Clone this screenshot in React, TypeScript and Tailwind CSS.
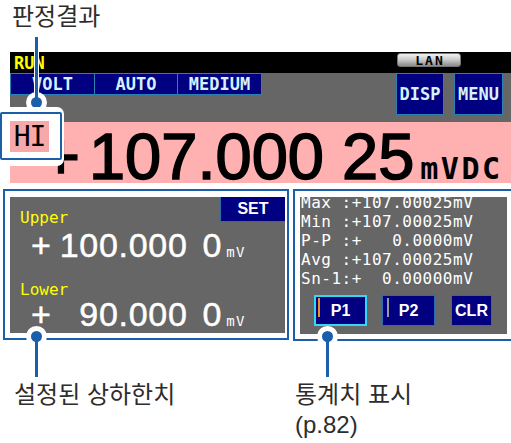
export default function App() {
  const statLines = [
    "Max :+107.00025mV",
    "Min :+107.00025mV",
    "P-P :+   0.0000mV",
    "Avg :+107.00025mV",
    "Sn-1:+  0.00000mV",
  ];
  return (
    <div className="relative h-[443px] w-[511px] overflow-hidden bg-white text-[#2d2d2d] [font-family:'Liberation_Sans','Noto_Sans_CJK_KR',sans-serif]">
      {/* title */}
      <div className="h-[52px] pl-[12px] pt-[2px] text-[24px] leading-[29px]">판정결과</div>

      {/* instrument screen */}
      <div className="ml-[10px]">
        <div className="flex h-[21px] bg-black">
          <span className="ml-[4px] mt-[3px] text-[17px] font-bold leading-[17px] text-[#ffff00] [font-family:'DejaVu_Sans_Mono',monospace]">
            RUN
          </span>
          <div className="ml-auto mr-[50px] mt-[1px] flex h-[14px] w-[64px] items-center justify-center rounded-[3px] border border-[#777777] bg-linear-to-b from-[#f2f2f2] via-[#c8c8c8] to-[#8a8a8a] pl-[2px] text-[13px] font-bold leading-none tracking-[2px] text-black [font-family:'DejaVu_Sans_Mono',monospace]">
            LAN
          </div>
        </div>
        <div className="flex h-[49px] items-start bg-[#666666]">
          <div className="flex h-[22px] border border-[#2a80b0] bg-[#000080] text-[17px] font-bold leading-none text-[#d4f2ff] [font-family:'DejaVu_Sans_Mono',monospace]">
            <div className="flex w-[84px] items-center justify-center border-r border-[#2a80b0]">VOLT</div>
            <div className="flex w-[83px] items-center justify-center border-r border-[#2a80b0]">AUTO</div>
            <div className="flex w-[83px] items-center justify-center">MEDIUM</div>
          </div>
          <div className="ml-auto mr-[8px] flex gap-[10px] text-[17px] font-bold leading-none text-[#d4f2ff] [font-family:'DejaVu_Sans_Mono',monospace]">
            <div className="flex h-[42px] w-[48px] items-center justify-center border border-[#2a80b0] bg-[#000080]">DISP</div>
            <div className="flex h-[42px] w-[49px] items-center justify-center border border-[#2a80b0] bg-[#000080]">MENU</div>
          </div>
        </div>
        <div className="h-[61px] whitespace-nowrap bg-[#ffb1b1] pl-[32px] text-[65px] leading-[70px] text-black">
          <span className="[-webkit-text-stroke:1.6px_black]">+</span>
          <span className="ml-[9px] [-webkit-text-stroke:1.6px_black]">107.000 25</span>
          <span className="ml-[6px] text-[30px] font-bold tracking-[2.5px] [font-family:'DejaVu_Sans_Mono',monospace]">mVDC</span>
        </div>
      </div>

      {/* panels */}
      <div className="mt-[6px] flex h-[152px] items-start">
        <div className="ml-[3px] h-[151px] w-[286px] border-2 border-[#1b5faa] pb-[5px] pl-[5px] pr-[2px] pt-[6px]">
          <div className="h-full bg-[#666666]">
            <div className="flex items-start justify-between">
              <span className="ml-[10px] mt-[13px] text-[16px] leading-[16px] text-[#ffff00] [font-family:'DejaVu_Sans_Mono',monospace]">
                Upper
              </span>
              <div className="flex h-[25px] w-[65px] items-center justify-center border-b border-l border-[#2a6ca8] bg-[#000080] text-[16px] font-bold leading-none text-white">
                SET
              </div>
            </div>
            <div className="mt-[2px] flex items-baseline whitespace-nowrap pl-[21px] text-[34px] leading-[34px] tracking-[0.7px] text-white [-webkit-text-stroke:0.5px_white]">
              <span>+</span>
              <span className="ml-[8px] w-[128px] text-right">100.000</span>
              <span className="ml-[15px]">0</span>
              <span className="ml-[4px] text-[14px] tracking-[1.5px] [-webkit-text-stroke:0px] [font-family:'DejaVu_Sans_Mono',monospace]">mV</span>
            </div>
            <div className="ml-[10px] mt-[13px] text-[16px] leading-[16px] text-[#ffff00] [font-family:'DejaVu_Sans_Mono',monospace]">
              Lower
            </div>
            <div className="-mt-[1px] flex items-baseline whitespace-nowrap pl-[21px] text-[34px] leading-[34px] tracking-[0.7px] text-white [-webkit-text-stroke:0.5px_white]">
              <span>+</span>
              <span className="ml-[8px] w-[128px] text-right">90.000</span>
              <span className="ml-[15px]">0</span>
              <span className="ml-[4px] text-[14px] tracking-[1.5px] [-webkit-text-stroke:0px] [font-family:'DejaVu_Sans_Mono',monospace]">mV</span>
            </div>
          </div>
        </div>

        <div className="ml-[4px] h-[152px] flex-1 border-b-2 border-l-2 border-t-2 border-[#1b5faa] pb-[5px] pl-[5px] pr-[4px] pt-[6px]">
          <div className="h-full overflow-hidden bg-[#666666] pl-[1px]">
            <div className="-mt-[4px] whitespace-pre text-[16px] leading-[19px] tracking-[0.5px] text-white [font-family:'DejaVu_Sans_Mono',monospace]">
              {statLines.map((l) => (
                <div key={l}>{l}</div>
              ))}
            </div>
            <div className="ml-[13px] mt-[7px] flex text-[16px] font-bold leading-none text-white">
              <div className="relative flex h-[31px] w-[53px] items-center justify-center border-2 border-[#36d6f6] bg-[#000080]">
                <span className="absolute left-[2px] top-[1px] h-[19px] w-[2px] bg-[#f0901c]" />
                P1
              </div>
              <div className="relative ml-[15px] flex h-[31px] w-[53px] items-center justify-center border border-[#2b6cb0] bg-[#000080]">
                <span className="absolute left-[4px] top-[2px] h-[19px] w-[2px] bg-[#9a9a9a]" />
                P2
              </div>
              <div className="ml-[16px] flex h-[31px] w-[41px] items-center justify-center border border-[#2b6cb0] bg-[#000080]">
                CLR
              </div>
            </div>
          </div>
        </div>
      </div>

      {/* bottom labels */}
      <div className="mt-[39px] flex text-[24px] leading-[30px]">
        <div className="w-[295px] pl-[14px]">설정된 상하한치</div>
        <div>
          통계치 표시
          <br />
          (p.82)
        </div>
      </div>

      {/* callout: judgement */}
      <div className="absolute left-[26px] top-[92px] h-[21px] w-[21px] rounded-full bg-white" />
      <div className="absolute left-[34px] top-[37px] h-[65px] w-[5px] bg-white" />
      <div className="absolute left-[35px] top-[37px] h-[65px] w-[3px] bg-[#1b5faa]" />
      <div className="absolute left-[31px] top-[97px] h-[11px] w-[11px] rounded-full bg-[#1b5faa]" />
      <div className="absolute -left-[6px] top-[107px] h-[59px] w-[70px] rounded-[7px] bg-white" />
      <div className="absolute left-0 top-[112px] h-[48px] w-[62px] rounded-[2px] border-2 border-[#1b5faa] bg-white pl-[8px] pt-[7px]">
        <div className="flex h-[31px] w-[39px] items-center justify-center bg-[#f7a9a9] text-[28px] leading-none tracking-[-1px] text-black [font-family:'DejaVu_Sans_Mono',monospace]">
          HI
        </div>
      </div>

      {/* callout: limits */}
      <div className="absolute left-[26px] top-[326px] h-[21px] w-[21px] rounded-full bg-white" />
      <div className="absolute left-[35px] top-[336px] h-[41px] w-[3px] bg-[#1b5faa]" />
      <div className="absolute left-[31px] top-[331px] h-[11px] w-[11px] rounded-full bg-[#1b5faa]" />

      {/* callout: statistics */}
      <div className="absolute left-[317px] top-[326px] h-[21px] w-[21px] rounded-full bg-white" />
      <div className="absolute left-[326px] top-[336px] h-[41px] w-[3px] bg-[#1b5faa]" />
      <div className="absolute left-[322px] top-[331px] h-[11px] w-[11px] rounded-full bg-[#1b5faa]" />
    </div>
  );
}
